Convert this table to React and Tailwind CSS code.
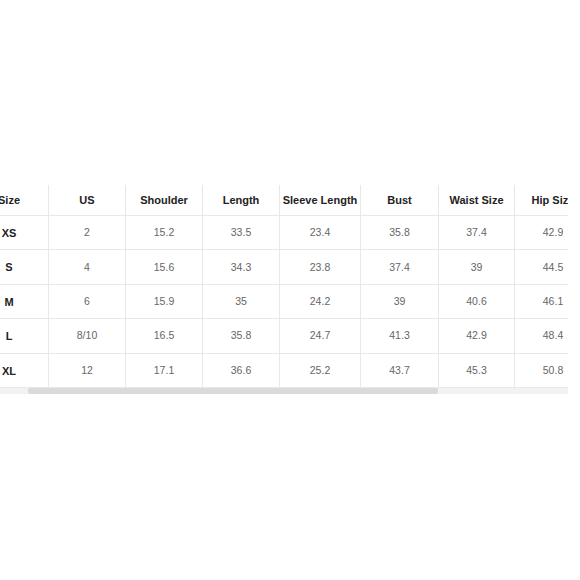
import React from "react";

const headers = ["Size", "US", "Shoulder", "Length", "Sleeve Length", "Bust", "Waist Size", "Hip Size"];
const rows = [
  ["XS", "2", "15.2", "33.5", "23.4", "35.8", "37.4", "42.9"],
  ["S", "4", "15.6", "34.3", "23.8", "37.4", "39", "44.5"],
  ["M", "6", "15.9", "35", "24.2", "39", "40.6", "46.1"],
  ["L", "8/10", "16.5", "35.8", "24.7", "41.3", "42.9", "48.4"],
  ["XL", "12", "17.1", "36.6", "25.2", "43.7", "45.3", "50.8"],
];
const widths = ["w-[79px]", "w-[77px]", "w-[77px]", "w-[77px]", "w-[81px]", "w-[78px]", "w-[76px]", "w-[76px]"];

export default function App() {
  return (
    <div className="w-[580px] h-[580px] bg-white pt-[185px] font-['Liberation_Sans',Arial,sans-serif]">
      <div className="w-[568px] overflow-hidden">
        <div className="ml-[-30px] w-[700px]">
          <div className="flex h-[31px] border-b border-[#e8e8e8]">
            {headers.map((h, i) => (
              <div
                key={i}
                className={`${widths[i]} shrink-0 flex items-center justify-center text-[11px] font-bold text-[#222] ${i < 7 ? "border-r border-[#e8e8e8]" : ""}`}
              >
                {h}
              </div>
            ))}
          </div>
          {rows.map((r, ri) => (
            <div key={ri} className="flex h-[34.4px] border-b border-[#e8e8e8]">
              {r.map((c, i) => (
                <div
                  key={i}
                  className={`${widths[i]} shrink-0 flex items-center justify-center ${i === 0 ? "text-[11px] font-bold text-[#222] pt-[1px]" : "text-[10.5px] text-[#666] pt-[1px]"} ${i < 7 ? "border-r border-[#e8e8e8]" : ""}`}
                >
                  {c}
                </div>
              ))}
            </div>
          ))}
        </div>
        <div className="h-[6px] bg-[#f2f2f2] flex">
          <div className="ml-[28px] w-[410px] h-full bg-[#dadada] rounded-[2px]" />
        </div>
      </div>
    </div>
  );
}
